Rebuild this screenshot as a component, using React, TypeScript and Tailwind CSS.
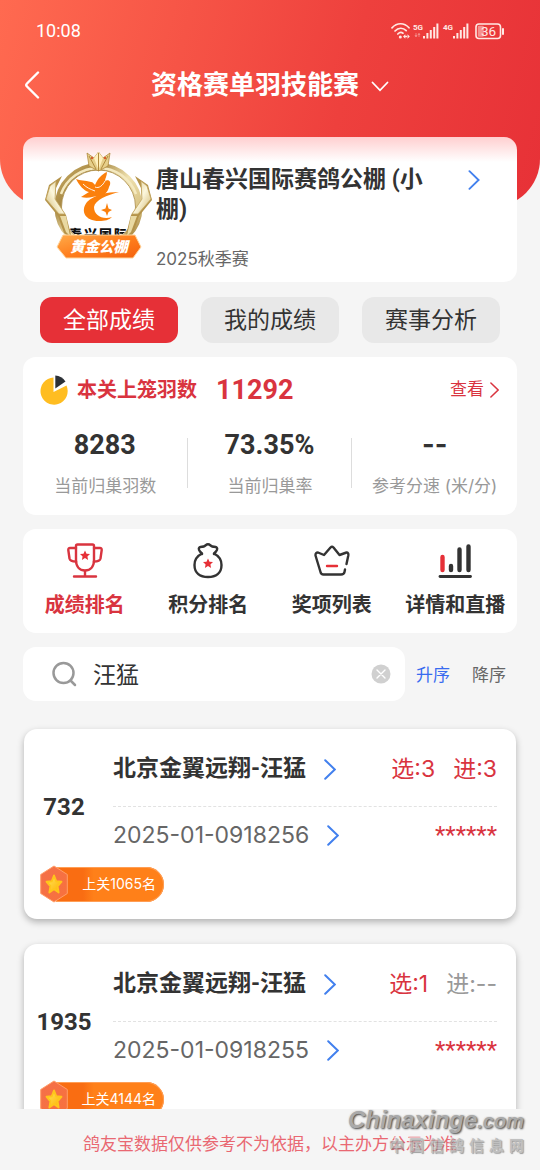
import React, { useState } from "react";

type Entry = {
  rank: string;
  owner: string;
  ring: string;
  selected: string;
  entered: string;
  previous: string;
};

const entries: Entry[] = [
  { rank: "732", owner: "北京金翼远翔-汪猛", ring: "2025-01-0918256", selected: "3", entered: "3", previous: "1065" },
  { rank: "1935", owner: "北京金翼远翔-汪猛", ring: "2025-01-0918255", selected: "1", entered: "--", previous: "4144" },
];

const stats = [
  { value: "8283", label: "当前归巢羽数" },
  { value: "73.35%", label: "当前归巢率" },
  { value: "--", label: "参考分速 (米/分)" },
];

const STAR = "M0-5 1.5-1.8 5-1.5 2.4.9 3.1 4.4 0 2.6-3.1 4.4-2.4.9-5-1.5-1.5-1.8Z";

function Chevron({ className }: { className: string }) {
  return (
    <svg viewBox="0 0 12 21" fill="none" stroke="currentColor" strokeWidth="2" strokeLinecap="round" className={className} aria-hidden="true">
      <path d="M1.2 1.2 10.8 10.5 1.2 19.8" />
    </svg>
  );
}

function SignalBars() {
  return (
    <g>
      <rect x="0" y="13" width="2" height="2.5" />
      <rect x="3.4" y="10" width="2" height="5.5" />
      <rect x="6.8" y="7" width="2" height="8.5" />
      <rect x="10.2" y="4" width="2" height="11.5" />
      <rect x="13.4" y="0.5" width="2" height="15" />
    </g>
  );
}

function StatusIcons() {
  return (
    <svg viewBox="0 0 114 20" className="h-5 w-[114px] text-[#ffe9e4]" fill="currentColor" role="img" aria-label="网络与电量">
      <g fill="none" stroke="currentColor" strokeWidth="1.7" strokeLinecap="round">
        <path d="M1 6.8C6 1.4 13.2 1.4 18 6.8" />
        <path d="M4 10C7.4 6.4 12 6.4 15.2 9.6" />
        <path d="M6.8 13C8.6 11.2 10.6 11.2 12 12.2" />
      </g>
      <circle cx="9.3" cy="16" r="1.5" />
      <path d="M12 15.5 14.3 13.3V17.7ZM18.8 15.5 16.5 13.3V17.7ZM14 14.8H17V16.2H14Z" />
      <text x="22" y="9" fontSize="8" fontWeight="700" fontFamily="Roboto, sans-serif">5G</text>
      <path d="M25 12V15M24 14 25 16 26 14M28 16V12.8M27 14 28 12.3 29 14" stroke="currentColor" strokeWidth="0.8" fill="none" opacity="0.5" />
      <g transform="translate(32 2)"><SignalBars /></g>
      <text x="52" y="9" fontSize="8" fontWeight="700" fontFamily="Roboto, sans-serif">4G</text>
      <g transform="translate(62 2)"><SignalBars /></g>
      <rect x="85" y="3" width="24.5" height="14.5" rx="3" fill="none" stroke="currentColor" strokeWidth="1.6" />
      <rect x="86.8" y="4.8" width="6" height="11" rx="1" opacity="0.5" />
      <rect x="111" y="7" width="2" height="7" rx="1" />
      <text x="97.5" y="15" fontSize="13.5" fontWeight="400" textAnchor="middle" fontFamily="Roboto, sans-serif">36</text>
    </svg>
  );
}

function LogoWing() {
  return (
    <g>
      <path d="M90 27 103 36 107 51 94 67 88 84 80 90 86 66 97 51 96 39Z" fill="#b4934a" />
      <path d="M96 32 102 37 106 50 93 65 87 65 97 50Z" fill="url(#wing)" stroke="#c3a65f" strokeWidth="0.8" />
      <path d="M92 67 86 83 82 87 86 67Z" fill="#e9d9a2" />
    </g>
  );
}

function ClubLogo() {
  return (
    <svg viewBox="0 0 108 112" className="h-28 w-[108px] shrink-0" role="img" aria-label="黄金公棚">
      <defs>
        <linearGradient id="ring" x1="0" y1="0" x2="1" y2="1">
          <stop offset="0" stopColor="#c9ad66" />
          <stop offset="0.25" stopColor="#a98a45" />
          <stop offset="0.5" stopColor="#f0e2b0" />
          <stop offset="0.75" stopColor="#d8c283" />
          <stop offset="1" stopColor="#8f6b25" />
        </linearGradient>
        <linearGradient id="wing" x1="0" y1="0" x2="1" y2="1">
          <stop offset="0" stopColor="#d8c283" />
          <stop offset="0.5" stopColor="#fcf7dd" />
          <stop offset="1" stopColor="#cdb36c" />
        </linearGradient>
        <linearGradient id="banner" x1="0" y1="0" x2="1" y2="1">
          <stop offset="0" stopColor="#ffab4a" />
          <stop offset="0.5" stopColor="#ff7f1e" />
          <stop offset="1" stopColor="#f4610d" />
        </linearGradient>
        <clipPath id="disc"><circle cx="53.500" cy="57" r="37" /></clipPath>
      </defs>
      <circle cx="53.5" cy="58" r="40.500" fill="#fff" stroke="url(#ring)" strokeWidth="7" />
      <path d="M16 45A40 40 0 0 1 91 45" fill="none" stroke="#f4e9bf" strokeWidth="2.5" />
      <circle cx="53.5" cy="58" r="37" fill="none" stroke="#a98a45" strokeWidth="0.8" />
      <LogoWing />
      <g transform="translate(107 0) scale(-1 1)"><LogoWing /></g>
      <path d="M42 4 49 9 53.500 3 58 9 65 4 63 17 53.500 22 44 17Z" fill="#e6cf8a" stroke="#a9802f" strokeWidth="0.7" />
      <path d="M49 9 53.500 21 58 9 53.500 3Z" fill="#fff0bd" />
      <path d="M44 7 51 20M63 7 56 20M53.500 4V22" stroke="#b08a3c" strokeWidth="1" />
      <circle cx="47" cy="9" r="1.2" fill="#d85b2c" />
      <circle cx="60" cy="9" r="1.2" fill="#d85b2c" />
      <path d="M31 30C35 32 40 31 46 33 48 33 49 35 50 36 53 29 57 25 62 23 62 27 60 29 60 32 64 30 67 33 64 38 63 43 59 47 54 47 49 47 44 50 36 48L44 43C39 42 34 36 31 30Z" fill="#fb800c" />
      <path d="M38 35C42 39 45 40 50 42M50 38C54 40 58 36 60 32" fill="none" stroke="#fff" strokeWidth="0.9" />
      <path d="M74 43C62 43 49 46 42 53 35 62 40 72 54 72 60 72 64 71 67 68 58 71 49 67 49 58 50 51 62 46 74 43Z" fill="#fb800c" />
      <path d="M62 54 63.500 59.500 67 61 63.500 63 62 67 60.500 63 56 61 60.500 59.500Z" fill="#fb800c" />
      <g clipPath="url(#disc)">
        <text x="24 39 54 69" y="90" fontSize="13" fontWeight="900" fill="#111" fontFamily="'Noto Sans CJK SC', sans-serif">春兴国际</text>
      </g>
      <path d="M18 86H90L96 98 88 109H21L12 98Z" fill="url(#banner)" stroke="#ffd49b" strokeWidth="1" />
      <text x="54" y="103" textAnchor="middle" fontSize="14.5" fontWeight="800" fontStyle="italic" fill="#fff" fontFamily="'Noto Sans CJK SC', sans-serif">黄金公棚</text>
    </svg>
  );
}

function PieIcon() {
  return (
    <svg viewBox="0 0 28 30" className="h-[30px] w-7" aria-hidden="true">
      <path d="M13.5 2.5A13.6 13.6 0 1 0 26.500 10.500L13.500 17Z" fill="#ffbd21" />
      <path d="M15.3.5A14 14 0 0 1 25.500 6.500L15.300 13.500Z" fill="#2c3036" />
    </svg>
  );
}

function TrophyIcon() {
  return (
    <svg viewBox="0 0 36 36" className="size-9" fill="none" stroke="#d9343f" strokeWidth="2.4" strokeLinecap="round" strokeLinejoin="round" aria-hidden="true">
      <path d="M9 3Q9 1.500 10.500 1.500H25.500Q27 1.500 27 3V17C27 24 23 27.500 18 27.500S9 24 9 17Z" />
      <path d="M9 5H3Q1.200 5 1.300 7L2.500 15.500Q3.200 18.500 9 18.500M27 5H33Q34.800 5 34.700 7L33.500 15.500Q32.800 18.500 27 18.500M18 28V33M7 33.500H29" />
      <path d={STAR} transform="translate(18 12.500)" fill="#e63037" stroke="none" />
    </svg>
  );
}

function BagIcon() {
  return (
    <svg viewBox="0 0 36 36" className="size-9" fill="none" stroke="#333" strokeWidth="2.400" strokeLinecap="round" strokeLinejoin="round" aria-hidden="true">
      <path d="M12 11C10 8 8.500 7.500 8.800 5.500 9.300 3.400 12 4 13.500 3.500 15 3.400 16 1.300 18 1.300S21 3.400 22.500 3.500C24 4 26.700 3.400 27.200 5.500 27.500 7.500 26 8 24 11" />
      <path d="M12 10.500C7 13 4.500 17.500 4.500 22 4.500 30 10 34 18 34S31.500 30 31.500 22C31.500 17.500 29 13 24 10.500" />
      <path d={STAR} transform="translate(18 20.500)" fill="#e63037" stroke="none" />
    </svg>
  );
}

function CrownIcon() {
  return (
    <svg viewBox="0 0 36 36" className="size-9" fill="none" stroke="#333" strokeWidth="2.400" strokeLinecap="round" strokeLinejoin="round" aria-hidden="true">
      <path d="M31 26.500 30.500 29Q30 31.500 27 31.500H9.500Q7 31.500 6.500 29L1.500 12.500Q1.300 9.500 4 9.500L10 12 16.500 4.500Q18 3 19.500 4.500L25.500 12 32.500 9.500Q34.800 9.500 34.300 12.500L32.500 21" />
      <path d="M13 23H23" stroke="#e63037" />
    </svg>
  );
}

function ChartIcon() {
  return (
    <svg viewBox="0 0 36 36" className="size-9" fill="none" stroke="#333" strokeWidth="4.400" strokeLinecap="round" aria-hidden="true">
      <path d="M5.500 14V27" stroke="#e63037" />
      <path d="M14 23V27M22.500 6.500V27M31.500 3.500V27" />
      <path d="M3 33.500H33.500" strokeWidth="2.800" />
    </svg>
  );
}

function MedalIcon() {
  return (
    <svg viewBox="0 0 28 38" className="z-10 h-[38px] w-7 shrink-0" aria-hidden="true">
      <defs>
        <linearGradient id="medal" x1="0" y1="0" x2="1" y2="1">
          <stop offset="0" stopColor="#f4704a" />
          <stop offset="1" stopColor="#f8713c" />
        </linearGradient>
        <linearGradient id="gold" x1="0" y1="0" x2="1" y2="1">
          <stop offset="0" stopColor="#ffe75e" />
          <stop offset="1" stopColor="#ffae00" />
        </linearGradient>
      </defs>
      <path d="M14 1 27.300 9.500V28.500L14 37 .700 28.500V9.500Z" fill="url(#medal)" stroke="#ff9e68" />
      <path d={STAR} transform="translate(14 19.500) scale(1.500 1.800)" fill="url(#gold)" stroke="#ffc51b" strokeWidth="1.200" strokeLinejoin="round" />
    </svg>
  );
}

const shortcuts = [
  { label: "成绩排名", Icon: TrophyIcon },
  { label: "积分排名", Icon: BagIcon },
  { label: "奖项列表", Icon: CrownIcon },
  { label: "详情和直播", Icon: ChartIcon },
];

function EntryCard({ entry }: { entry: Entry }) {
  const missing = entry.entered === "--";
  return (
    <article className="shrink-0 rounded-[13px] bg-white px-3 pt-4 pb-4 shadow-[0_3px_7px_rgba(0,0,0,0.28)]">
      <div className="flex items-center">
        <strong className="mt-[6px] w-14 shrink-0 text-center text-2xl font-bold whitespace-nowrap">{entry.rank}</strong>
        <div className="ml-[21px] min-w-0 flex-1 pr-[7px]">
          <div className="flex h-[62px] items-center justify-between border-b border-dashed border-[#e2e2e2] pb-3">
            <a href="#owner" className="flex items-center gap-[18px] text-[23px] font-bold whitespace-nowrap">
              {entry.owner}
              <Chevron className="h-[21px] w-3 text-[#4280ee]" />
            </a>
            <div className="flex gap-[18px] font-['Inter','Noto_Sans_CJK_SC',sans-serif] text-[23px] whitespace-nowrap text-[#d9343f]">
              <span>选:{entry.selected}</span>
              <span className={missing ? "text-[#999]" : ""}>进:{entry.entered}</span>
            </div>
          </div>
          <div className="flex h-14 items-center justify-between">
            <a href="#ring" className="flex items-center gap-[18px] font-['Inter',sans-serif] text-[23px] whitespace-nowrap text-[#666]">
              {entry.ring}
              <Chevron className="h-[21px] w-3 text-[#4280ee]" />
            </a>
            <span className="text-2xl text-[#d9343f]">******</span>
          </div>
        </div>
      </div>
      <div className="mt-[2px] flex h-[38px] items-center pl-1">
        <MedalIcon />
        <span className="-ml-3 flex h-[35px] w-[108px] items-center justify-end rounded-r-full bg-linear-to-r from-[#f96d12] from-25% to-[#ff8019] to-35% pr-2 font-['Inter','Noto_Sans_CJK_SC',sans-serif] text-sm whitespace-nowrap text-white shadow-[inset_0_0_0_1px_#ff9e55]">
          上关{entry.previous}名
        </span>
      </div>
    </article>
  );
}

export default function App() {
  const [query, setQuery] = useState("汪猛");

  return (
    <div className="relative flex h-dvh flex-col overflow-hidden bg-[#f5f5f5] font-['Roboto','Noto_Sans_CJK_SC',sans-serif] text-[#333]">
      <header className="h-[207px] shrink-0 rounded-b-[48px] bg-linear-[105deg,#ff6a50_0%,#ee403d_62%,#e73137_100%] text-white">
        <div className="flex h-[61px] items-center justify-between pr-[35px] pl-9">
          <span className="text-lg">10:08</span>
          <StatusIcons />
        </div>
        <div className="grid h-12 grid-cols-[44px_1fr_44px] items-center">
          <button type="button" aria-label="返回" className="pl-6">
            <svg viewBox="0 0 16 28" className="h-7 w-4" fill="none" stroke="currentColor" strokeWidth="2.400" strokeLinecap="round" aria-hidden="true">
              <path d="M14 1.500 3 12.500Q1.500 14 3 15.500L14 26.500" />
            </svg>
          </button>
          <button type="button" className="flex items-center justify-center gap-3 pt-px text-[26px] font-bold whitespace-nowrap">
            资格赛单羽技能赛
            <svg viewBox="0 0 18 11" className="mt-[2px] h-[11px] w-[18px]" fill="none" stroke="currentColor" strokeWidth="1.800" strokeLinecap="round" aria-hidden="true">
              <path d="M1.500 1.500 9 9.300 16.500 1.500" />
            </svg>
          </button>
        </div>
      </header>

      <main className="-mt-[70px] flex min-h-0 flex-1 flex-col px-[23px]">
        <a href="#club" className="flex h-[145px] shrink-0 items-start rounded-[13px] bg-white bg-linear-to-b from-[#ffcfd0] to-white to-[25px] px-[22px] pt-3">
          <ClubLogo />
          <div className="ml-[3px] w-[290px] pt-4">
            <h1 className="text-[23px] leading-[30px] font-bold">唐山春兴国际赛鸽公棚 (小棚)</h1>
            <p className="mt-[22px] font-['Inter','Noto_Sans_CJK_SC',sans-serif] text-[17px] leading-6 text-[#666]">2025秋季赛</p>
          </div>
          <Chevron className="mt-[21px] ml-[22px] h-5 w-3 text-[#4280ee]" />
        </a>

        <nav className="mt-[15px] grid shrink-0 grid-cols-3 gap-[23px] px-[17px] text-[23px]">
          <button type="button" className="h-[46px] rounded-xl bg-[#e63037] pt-[3px] text-white">全部成绩</button>
          <button type="button" className="h-[46px] rounded-xl bg-[#e8e8e8] pt-[3px]">我的成绩</button>
          <button type="button" className="h-[46px] rounded-xl bg-[#e8e8e8] pt-[3px]">赛事分析</button>
        </nav>

        <section className="mt-[14px] h-[158px] shrink-0 rounded-[13px] bg-white pt-[13px]">
          <div className="flex h-10 items-center pr-[18px] pl-[17px]">
            <PieIcon />
            <span className="ml-[9px] text-xl font-bold text-[#d9343f]">本关上笼羽数</span>
            <strong className="ml-[19px] text-[27px] font-bold text-[#d9343f]">11292</strong>
            <a href="#details" className="ml-auto flex items-center gap-[6px] text-[17px] text-[#d9343f]">
              查看
              <Chevron className="h-4 w-[9px]" />
            </a>
          </div>
          <dl className="grid grid-cols-3 pt-[18px]">
            {stats.map((stat, index) => (
              <div key={stat.label} className="flex flex-col-reverse items-center">
                <dt className="mt-3 w-full text-center font-['Inter','Noto_Sans_CJK_SC',sans-serif] text-[17px] leading-6 whitespace-nowrap text-[#999]">{stat.label}</dt>
                <dd className="flex h-[34px] w-full items-center justify-center text-[27px] font-bold">
                  <span className={stat.value === "--" ? "flex-1 text-center font-['Inter',sans-serif]" : "flex-1 text-center"}>{stat.value}</span>
                  {index < 2 && <i className="mt-[10px] h-[50px] w-px shrink-0 self-start bg-[#ddd]" />}
                </dd>
              </div>
            ))}
          </dl>
        </section>

        <nav className="mt-[14px] grid h-[104px] shrink-0 grid-cols-4 rounded-[13px] bg-white">
          {shortcuts.map(({ label, Icon }, index) => (
            <button key={label} type="button" className={index === 0 ? "flex flex-col items-center pt-[14px] text-xl leading-7 font-bold whitespace-nowrap text-[#d9343f]" : "flex flex-col items-center pt-[14px] text-xl leading-7 font-bold whitespace-nowrap"}>
              <Icon />
              <span className="mt-3">{label}</span>
            </button>
          ))}
        </nav>

        <div className="mt-[14px] flex h-[54px] shrink-0 items-center">
          <div className="flex h-full min-w-0 flex-1 items-center rounded-[13px] bg-white pr-[14px] pl-[29px]">
            <svg viewBox="0 0 26 26" className="size-[26px] shrink-0" fill="none" stroke="#999" strokeWidth="2.500" strokeLinecap="round" aria-hidden="true">
              <circle cx="11.500" cy="12" r="10" />
              <path d="M18.500 19.500 23 24" />
            </svg>
            <input aria-label="搜索" value={query} onChange={(e) => setQuery(e.target.value)} className="ml-[15px] min-w-0 flex-1 bg-transparent pt-1 text-[23px] outline-none" />
            <button type="button" aria-label="清除" onClick={() => setQuery("")}>
              <svg viewBox="0 0 20 20" className="size-5" aria-hidden="true">
                <circle cx="10" cy="10" r="9.500" fill="#d0d0d0" />
                <path d="M6 6 14 14M14 6 6 14" stroke="#fff" strokeWidth="1.400" strokeLinecap="round" />
              </svg>
            </button>
          </div>
          <button type="button" className="ml-[11px] pt-[3px] text-[17px] text-[#386bf0]">升序</button>
          <button type="button" className="mr-[11px] ml-[22px] pt-[3px] text-[17px] text-[#666]">降序</button>
        </div>

        <div className="-mx-[23px] mt-[14px] flex min-h-0 flex-1 flex-col gap-[25px] overflow-hidden px-6 pt-[14px]">
          {entries.map((entry) => (
            <EntryCard key={entry.ring} entry={entry} />
          ))}
        </div>
      </main>

      <footer className="flex h-[61px] shrink-0 items-center justify-center pt-[10px] text-[17px] whitespace-nowrap text-[#e96872]">
        鸽友宝数据仅供参考不为依据，以主办方公示为准
      </footer>

      <div className="absolute right-4 bottom-[13px] w-[180px] text-[#aaa]">
        <p className="text-right font-['Liberation_Sans'] text-2xl leading-[30px] font-bold whitespace-nowrap italic [text-shadow:1px_1px_2px_#444,-1px_-1px_0_#eee]">
          Chinaxinge<span className="text-xl">.com</span>
        </p>
        <p className="ml-[45px] flex justify-between text-[15px] leading-[22px] font-bold opacity-70 [text-shadow:1px_1px_1px_#777,-1px_-1px_0_#eee]">
          {Array.from("中国信鸽信息网").map((char, index) => (
            <span key={index}>{char}</span>
          ))}
        </p>
      </div>
    </div>
  );
}
